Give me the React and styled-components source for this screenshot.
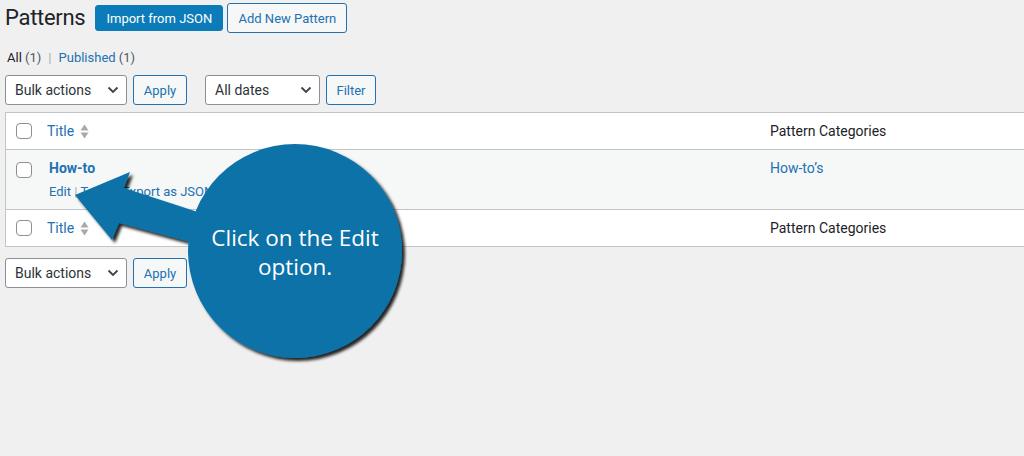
import React from "react";
import styled, { createGlobalStyle } from "styled-components";

const GlobalStyle = createGlobalStyle`
  html, body { margin: 0; padding: 0; background: #f0f0f1; overflow: hidden; }
  body {
    font-family: Roboto, "Noto Sans", "Liberation Sans", sans-serif;
    font-size: 13px;
    color: #3c434a;
  }
  * { box-sizing: border-box; }
`;

const Page = styled.div`
  position: relative;
  width: 1024px;
  height: 456px;
  overflow: hidden;
  padding: 3px 0 0 5px;
`;

const HeaderBar = styled.div`
  display: flex;
  align-items: center;
  height: 30px;
`;

const Heading = styled.h1`
  margin: 0 10px 0 0;
  font-size: 22px;
  letter-spacing: -0.3px;
  font-weight: 400;
  line-height: 30px;
  color: #1d2327;
`;

const Button = styled.div`
  display: flex;
  align-items: center;
  justify-content: center;
  height: ${(p) => (p.$primary ? 26 : 30)}px;
  padding: 0 ${(p) => p.$pad || 10}px;
  margin-right: ${(p) => p.$mr || 0}px;
  border-radius: 3px;
  font-size: 13px;
  line-height: 1;
  white-space: nowrap;
  border: 1px solid ${(p) => (p.$primary ? "#0c7bb9" : "#2271b1")};
  background: ${(p) => (p.$primary ? "#0c7bb9" : "#f6f7f7")};
  color: ${(p) => (p.$primary ? "#fff" : "#2271b1")};
`;

const SubNav = styled.div`
  margin: 16px 0 0 2px;
  line-height: 18px;
  font-size: 13px;
  display: flex;
  gap: 4px;
`;

const NavItem = styled.span`
  color: ${(p) => (p.$current ? "#1d2327" : "#2271b1")};
`;

const Count = styled.span`
  color: #50575e;
`;

const Sep = styled.span`
  color: #a7aaad;
  margin: 0 3px;
`;

const Controls = styled.div`
  display: flex;
  align-items: center;
  height: 30px;
  margin-top: ${(p) => p.$mt}px;
`;

const Select = styled.div`
  display: flex;
  align-items: center;
  justify-content: space-between;
  width: ${(p) => p.$w}px;
  height: 30px;
  padding: 0 7px 0 9px;
  margin-right: ${(p) => p.$mr || 0}px;
  border: 1px solid #8c8f94;
  border-radius: 3px;
  background: #fff;
  color: #2c3338;
  font-size: 14px;
  svg { display: block; }
`;

const Table = styled.div`
  margin-top: 7px;
  width: 1040px;
  border: 1px solid #c3c4c7;
  background: #fff;
`;

const Row = styled.div`
  display: grid;
  grid-template-columns: 41px 723px 1fr;
  align-items: ${(p) => (p.$body ? "start" : "center")};
  height: ${(p) => (p.$body ? 60 : p.$last ? 36 : 37)}px;
  background: ${(p) => (p.$body ? "#f6f7f7" : "#fff")};
  border-bottom: ${(p) => (p.$last ? "none" : "1px solid #c3c4c7")};
  padding-top: ${(p) => (p.$body ? 8 : 0)}px;
`;

const CheckCell = styled.div`
  padding-left: 10px;
  padding-top: ${(p) => (p.$body ? 4 : 0)}px;
  display: flex;
`;

const Checkbox = styled.span`
  width: 16px;
  height: 16px;
  border: 1px solid #8c8f94;
  border-radius: 4px;
  background: #fff;
`;

const SortLink = styled.div`
  display: flex;
  align-items: center;
  gap: 6px;
  color: #2271b1;
  font-size: 14px;
`;

const ColHead = styled.div`
  color: #1d2327;
  font-size: 14px;
`;

const TitleCell = styled.div`
  padding-left: 2px;
`;

const RowTitle = styled.div`
  font-size: 14px;
  font-weight: 700;
  line-height: 20px;
  color: #2271b1;
`;

const RowActions = styled.div`
  margin-top: 5px;
  line-height: 18px;
  font-size: 13px;
  color: #2271b1;
`;

const ActionSep = styled.span`
  color: #a7aaad;
`;

const CatLink = styled.div`
  font-size: 14px;
  line-height: 20px;
  color: #2271b1;
`;

const Overlay = styled.svg`
  position: absolute;
  left: 0;
  top: 0;
  pointer-events: none;
`;

const BubbleText = styled.div`
  position: absolute;
  left: 188px;
  top: 223px;
  width: 214px;
  text-align: center;
  font-family: "Open Sans", "Noto Sans", sans-serif;
  font-size: 22.5px;
  line-height: 29px;
  color: #fff;
`;

const Chevron = () => (
  <svg width="12" height="8" viewBox="0 0 12 8">
    <path d="M1.5 1.5 L6 6 L10.5 1.5" fill="none" stroke="#3c434a" strokeWidth="1.8" />
  </svg>
);

const SortIcon = () => (
  <svg width="9" height="15" viewBox="0 0 9 15">
    <path d="M4.5 0.5 L8.5 6.5 L0.5 6.5 Z" fill="#a7aaad" />
    <path d="M0.5 8.5 L8.5 8.5 L4.5 14.5 Z" fill="#a7aaad" />
  </svg>
);

const HeadRow = ({ last }) => (
  <Row $last={last}>
    <CheckCell>
      <Checkbox />
    </CheckCell>
    <SortLink>
      Title <SortIcon />
    </SortLink>
    <ColHead>Pattern Categories</ColHead>
  </Row>
);

export default function App() {
  return (
    <>
      <GlobalStyle />
      <Page>
        <HeaderBar>
          <Heading>Patterns</Heading>
          <Button $primary $mr={4} style={{ width: 128 }}>Import from JSON</Button>
          <Button style={{ width: 120 }}>Add New Pattern</Button>
        </HeaderBar>

        <SubNav>
          <NavItem $current>
            All <Count>(1)</Count>
          </NavItem>
          <Sep>|</Sep>
          <NavItem>
            Published <Count>(1)</Count>
          </NavItem>
        </SubNav>

        <Controls $mt={8}>
          <Select $w={122} $mr={6}>
            Bulk actions <Chevron />
          </Select>
          <Button $mr={18} style={{ width: 54 }}>Apply</Button>
          <Select $w={115} $mr={6}>
            All dates <Chevron />
          </Select>
          <Button style={{ width: 50 }}>Filter</Button>
        </Controls>

        <Table>
          <HeadRow />
          <Row $body>
            <CheckCell $body>
              <Checkbox />
            </CheckCell>
            <TitleCell>
              <RowTitle>How-to</RowTitle>
              <RowActions>
                Edit <ActionSep>|</ActionSep> Trash <ActionSep>|</ActionSep> Export as JSON
              </RowActions>
            </TitleCell>
            <CatLink>How-to’s</CatLink>
          </Row>
          <HeadRow last />
        </Table>

        <Controls $mt={11}>
          <Select $w={122} $mr={6}>
            Bulk actions <Chevron />
          </Select>
          <Button style={{ width: 54 }}>Apply</Button>
        </Controls>

        <Overlay width="1024" height="456" viewBox="0 0 1024 456">
          <defs>
            <filter id="shadow" x="-20%" y="-20%" width="140%" height="140%">
              <feDropShadow dx="3" dy="3" stdDeviation="1.8" floodColor="#000" floodOpacity="0.85" />
            </filter>
          </defs>
          <g filter="url(#shadow)" fill="#0b72a8">
            <polygon points="75,195 130,172 124,188 210,216 205,246 119,223 112,240" />
            <circle cx="295" cy="251" r="107" />
          </g>
        </Overlay>
        <BubbleText>
          Click on the Edit
          <br />
          option.
        </BubbleText>
      </Page>
    </>
  );
}
